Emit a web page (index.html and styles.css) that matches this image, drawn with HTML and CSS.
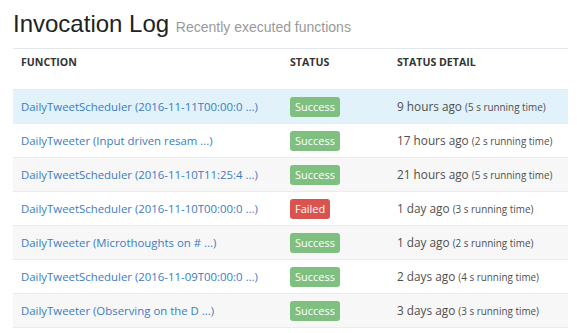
FILE: index.html
```html
<!DOCTYPE html>
<html lang="en">
<head>
  <meta charset="UTF-8" />
  <title>Invocation Log</title>
  <link rel="stylesheet" href="styles.css">
</head>
<body>
  <div class="page">
    <h1>Invocation Log <small>Recently executed functions</small></h1>
    <table class="log">
      <thead>
        <tr>
          <th class="col-fn">Function</th>
          <th class="col-status">Status</th>
          <th>Status Detail</th>
        </tr>
      </thead>
      <tbody>
        <tr class="active">
          <td><a href="#">DailyTweetScheduler (2016-11-11T00:00:0 ...)</a></td>
          <td><span class="label ok">Success</span></td>
          <td class="detail">9 hours ago <small>(5 s running time)</small></td>
        </tr>
        <tr>
          <td><a href="#">DailyTweeter (Input driven resam ...)</a></td>
          <td><span class="label ok">Success</span></td>
          <td class="detail">17 hours ago <small>(2 s running time)</small></td>
        </tr>
        <tr class="stripe">
          <td><a href="#">DailyTweetScheduler (2016-11-10T11:25:4 ...)</a></td>
          <td><span class="label ok">Success</span></td>
          <td class="detail">21 hours ago <small>(5 s running time)</small></td>
        </tr>
        <tr>
          <td><a href="#">DailyTweetScheduler (2016-11-10T00:00:0 ...)</a></td>
          <td><span class="label fail">Failed</span></td>
          <td class="detail">1 day ago <small>(3 s running time)</small></td>
        </tr>
        <tr class="stripe">
          <td><a href="#">DailyTweeter (Microthoughts on # ...)</a></td>
          <td><span class="label ok">Success</span></td>
          <td class="detail">1 day ago <small>(2 s running time)</small></td>
        </tr>
        <tr>
          <td><a href="#">DailyTweetScheduler (2016-11-09T00:00:0 ...)</a></td>
          <td><span class="label ok">Success</span></td>
          <td class="detail">2 days ago <small>(4 s running time)</small></td>
        </tr>
        <tr class="stripe">
          <td><a href="#">DailyTweeter (Observing on the D ...)</a></td>
          <td><span class="label ok">Success</span></td>
          <td class="detail">3 days ago <small>(3 s running time)</small></td>
        </tr>
      </tbody>
    </table>
  </div>
</body>
</html>
```

FILE: styles.css
```css
* {
  box-sizing: border-box;
  padding: 0;
  margin: 0;
}

body {
  font-family: 'Open Sans', sans-serif;
  background: #fff;
  color: #555;
}

.page {
  padding: 8px 9px 0 13px;
}

h1 {
  font-family: 'Liberation Sans', Arial, sans-serif;
  font-weight: normal;
  font-size: 24px;
  line-height: 32px;
  color: #222;
  padding-bottom: 8px;
  border-bottom: 1px solid #e3e7ee;
}

h1 small {
  font-size: 14px;
  line-height: 1;
  color: #999;
}

.log {
  width: 555px;
  border-collapse: collapse;
  font-size: 11.4px;
}

.log th {
  text-align: left;
  text-transform: uppercase;
  font-size: 10.6px;
  font-weight: bold;
  color: #333;
  padding: 8px 8px 22px;
  line-height: 10px;
  border-bottom: 1px solid #ebebeb;
}

.col-fn { width: 269px; }
.col-status { width: 107px; }

.log td {
  height: 34px;
  padding: 0 8px;
  line-height: 16px;
  border-top: 1px solid #ebebeb;
  vertical-align: middle;
}

.log tbody tr:last-child td {
  border-bottom: 1px solid #ebebeb;
}

.log tr.active td { background: #e1f2fa; }
.log tr.stripe td { background: #f7f7f7; }

.log a {
  color: #3a7cc1;
  text-decoration: none;
}

.label {
  display: inline-block;
  vertical-align: middle;
  color: #fff;
  font-size: 11px;
  line-height: 14px;
  padding: 3px 5px;
  border-radius: 3px;
}

.label.ok { background: #7fbf7f; }
.label.fail { background: #d9534f; }

.detail {
  font-size: 11.8px;
  color: #4f4f4f;
}

.detail small {
  font-size: 9.9px;
}
```
